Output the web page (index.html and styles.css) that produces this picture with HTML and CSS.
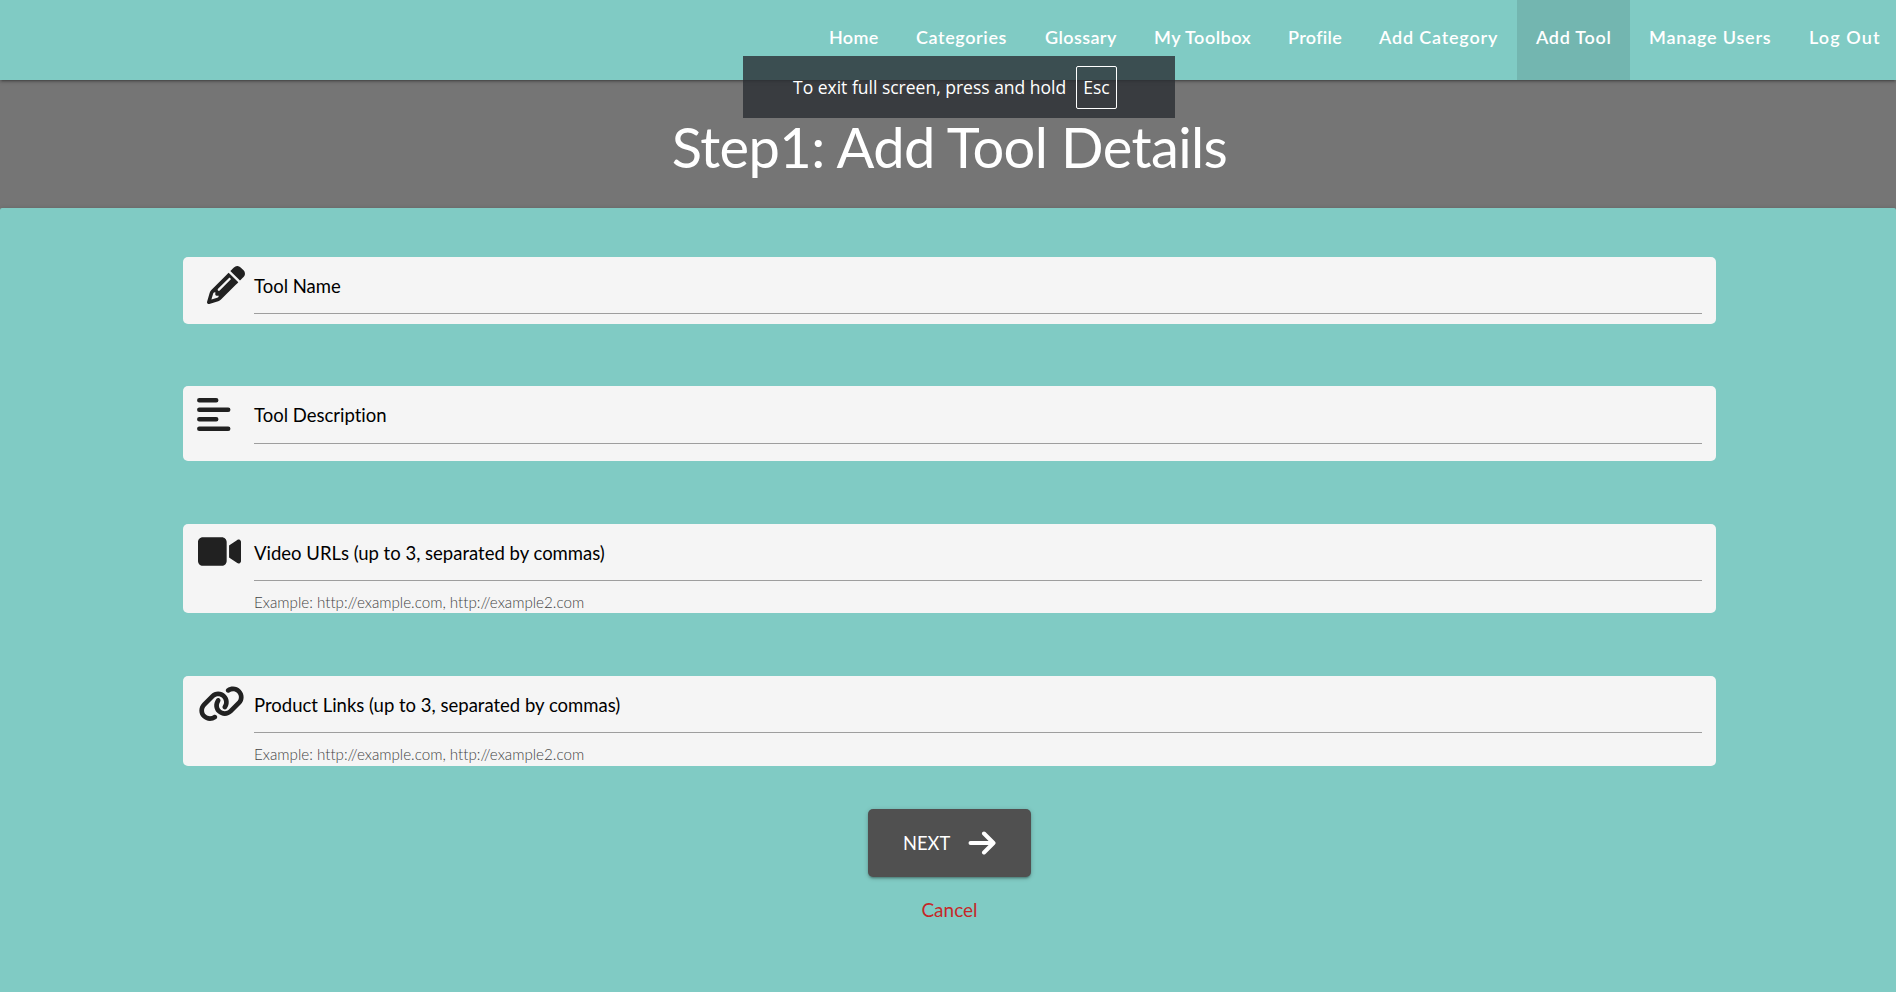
FILE: index.html
```html
<!DOCTYPE html>
<html lang="en">
<head>
<meta charset="utf-8">
<title>Add Tool</title>
<link rel="stylesheet" href="styles.css">
</head>
<body>
<nav class="nav">
  <a class="nav-link home">Home</a>
  <a class="nav-link categories">Categories</a>
  <a class="nav-link glossary">Glossary</a>
  <a class="nav-link toolbox">My Toolbox</a>
  <a class="nav-link profile">Profile</a>
  <a class="nav-link add-category">Add Category</a>
  <a class="nav-link add-tool active">Add Tool</a>
  <a class="nav-link users">Manage Users</a>
  <a class="nav-link logout">Log Out</a>
</nav>
<header class="banner"><h1 class="title">Step1: Add Tool Details</h1></header>
<main class="panel">
  <form class="form">
    <div class="field name">
      <svg class="icon pencil" viewBox="0 0 512 512"><path d="M410.300 231l11.300-11.300-33.900-33.900-62.100-62.100L291.700 89.800l-11.300 11.300-22.600 22.600L58.600 322.900c-10.400 10.400-18 23.300-22.200 37.400L1 480.700c-2.500 8.400-.2 17.500 6.100 23.700s15.300 8.500 23.700 6.100l120.300-35.400c14.100-4.200 27-11.800 37.400-22.200L387.700 253.700 410.300 231zM160 399.400l-9.100 22.700c-4 3.100-8.500 5.400-13.300 6.900L59.400 452l23-78.100c1.400-4.900 3.800-9.400 6.900-13.300l22.700-9.100v32c0 8.800 7.200 16 16 16h32zM362.700 18.700L348.300 33.200 325.700 55.800 314.300 67.100l33.900 33.900 62.100 62.100 33.900 33.900 11.300-11.300 22.600-22.600 14.500-14.500c25-25 25-65.500 0-90.500L453.300 18.700c-25-25-65.500-25-90.500 0zm-47.400 168l-144 144c-6.200 6.200-16.400 6.200-22.600 0s-6.200-16.400 0-22.600l144-144c6.200-6.200 16.400-6.200 22.600 0s6.200 16.400 0 22.600z"/></svg>
      <div class="control"><label class="label">Tool Name</label></div>
    </div>
    <div class="field description">
      <svg class="icon lines" viewBox="0 0 34 34"><path d="M2.300 2.300H19.200M2.300 11.800H31.200M2.300 21.300H19.200M2.300 30.800H31.200"/></svg>
      <div class="control"><label class="label">Tool Description</label></div>
    </div>
    <div class="field video">
      <svg class="icon camera" viewBox="0 64 576 384"><path d="M0 128C0 92.700 28.700 64 64 64H320c35.300 0 64 28.700 64 64V384c0 35.300-28.700 64-64 64H64c-35.300 0-64-28.700-64-64V128zM559.100 99.800c10.400 5.600 16.900 16.400 16.900 28.200V384c0 11.800-6.500 22.600-16.900 28.200s-23 5-32.900-1.600l-96-64L416 337.100V174.900l14.200-9.500 96-64c9.800-6.500 22.400-7.200 32.900-1.600z"/></svg>
      <div class="control"><label class="label">Video URLs (up to 3, separated by commas)</label></div>
      <span class="helper">Example: http://example.com, http://example2.com</span>
    </div>
    <div class="field links">
      <svg class="icon chain" viewBox="0 0 640 512"><path d="M579.800 267.700c56.500-56.500 56.500-148 0-204.500c-50-50-128.800-56.500-186.300-15.400l-1.600 1.100c-14.400 10.300-17.700 30.300-7.400 44.600s30.300 17.700 44.600 7.400l1.600-1.100c32.100-22.900 76-19.300 103.800 8.600c31.500 31.500 31.500 82.500 0 114L422.300 334.800c-31.500 31.500-82.500 31.500-114 0c-27.900-27.900-31.500-71.800-8.600-103.800l1.100-1.600c10.300-14.400 6.900-34.400-7.400-44.600s-34.400-6.900-44.600 7.400l-1.100 1.600C206.500 251.200 213 330 263 380c56.500 56.500 148 56.500 204.500 0L579.800 267.700zM60.200 244.300c-56.500 56.500-56.500 148 0 204.500c50 50 128.800 56.500 186.300 15.400l1.600-1.100c14.400-10.300 17.700-30.300 7.400-44.600s-30.300-17.700-44.600-7.400l-1.600 1.100c-32.100 22.900-76 19.300-103.800-8.600C74 372 74 321 105.500 289.500L217.700 177.200c31.500-31.500 82.500-31.500 114 0c27.900 27.900 31.500 71.800 8.600 103.900l-1.100 1.600c-10.300 14.400-6.900 34.400 7.400 44.600s34.400 6.900 44.600-7.400l1.100-1.600C433.500 260.800 427 182 377 132c-56.500-56.500-148-56.500-204.500 0L60.200 244.300z"/></svg>
      <div class="control"><label class="label">Product Links (up to 3, separated by commas)</label></div>
      <span class="helper">Example: http://example.com, http://example2.com</span>
    </div>
    <button class="next" type="button"><span class="next-text">NEXT</span><svg class="arrow" viewBox="0 0 28 24"><path d="M2.500 12H25M16 2.500L25.500 12L16 21.500"/></svg></button>
    <a class="cancel">Cancel</a>
  </form>
</main>
<div class="toast"><span class="toast-text">To exit full screen, press and hold</span><span class="key">Esc</span></div>
</body>
</html>
```

FILE: styles.css
```css
* { box-sizing: border-box; }
body { margin: 0; height: 992px; overflow: hidden; background: #757575; font-family: Lato, sans-serif; color: #000; font-variant-ligatures: none; }
.nav { position: relative; height: 80px; display: flex; padding-left: 810px; background: #80cbc4; box-shadow: 0 2px 2px 0 rgba(0,0,0,.14), 0 3px 1px -2px rgba(0,0,0,.12), 0 1px 5px 0 rgba(0,0,0,.2); }
.nav-link { flex: none; height: 80px; padding-left: 19px; line-height: 75px; color: #fff; font-size: 18px; font-weight: 600; white-space: nowrap; }
.home { width: 87px; letter-spacing: .3px; }
.categories { width: 129px; letter-spacing: .6px; }
.glossary { width: 109px; letter-spacing: .4px; }
.toolbox { width: 134px; letter-spacing: .5px; }
.profile { width: 91px; letter-spacing: .3px; }
.add-category { width: 157px; letter-spacing: .8px; }
.add-tool { width: 113px; letter-spacing: .7px; }
.users { width: 160px; letter-spacing: .8px; }
.logout { width: 106px; letter-spacing: 1.1px; }
.active { background: #73b6b0; }
.banner { height: 128px; display: flex; justify-content: center; }
.title { margin: 33px 0 0 3px; font-size: 56px; font-weight: 400; line-height: 68px; letter-spacing: -.6px; color: #fff; white-space: nowrap; }
.panel { height: 800px; background: #80cbc4; border-radius: 2px; padding: 49px 180px 0 183px; box-shadow: 0 2px 2px 0 rgba(0,0,0,.14), 0 3px 1px -2px rgba(0,0,0,.12), 0 1px 5px 0 rgba(0,0,0,.2); }
.form { display: flex; flex-direction: column; align-items: center; }
.field { width: 1533px; flex: none; display: grid; grid-template-columns: 57px 1448px; grid-template-rows: auto 1fr; padding-left: 14px; background: #f5f5f5; border-radius: 5px; }
.name { height: 67px; margin-bottom: 62px; }
.description { height: 75px; margin-bottom: 63px; }
.video { height: 89px; margin-bottom: 63px; }
.links { height: 90px; margin-bottom: 43px; }
.control { height: 57px; border-bottom: 1px solid #9e9e9e; }
.description .control { height: 58px; }
.label { display: block; padding-top: 17px; line-height: 24px; font-size: 18.5px; white-space: nowrap; }
.helper { grid-column: 2; padding-top: 11px; line-height: 20px; font-size: 15.2px; font-weight: 300; color: #444; white-space: nowrap; }
.icon { fill: #212121; }
.pencil { width: 38px; height: 38px; margin: 9px 0 0 10px; }
.lines { width: 34px; height: 34px; margin: 12px 0 0 .4px; fill: none; stroke: #212121; stroke-width: 4.500; stroke-linecap: round; }
.camera { width: 43px; height: 29px; margin: 13px 0 0 .5px; }
.chain { width: 47px; height: 37.5px; margin: 9px 0 0 .5px; }
.next { width: 163px; height: 68px; flex: none; display: flex; align-items: center; padding: 0 0 0 35px; border: 0; border-radius: 5px; background: #505050; color: #fff; font-family: Lato, sans-serif; font-size: 18.3px; box-shadow: 0 2px 2px 0 rgba(0,0,0,.14), 0 3px 1px -2px rgba(0,0,0,.12), 0 1px 5px 0 rgba(0,0,0,.2); }
.next-text { width: 65px; text-align: left; }
.arrow { width: 28px; height: 24px; fill: none; stroke: #fff; stroke-width: 4; stroke-linecap: round; stroke-linejoin: round; }
.cancel { margin-top: 21px; line-height: 24px; font-size: 19px; color: #c62828; }
.toast { position: absolute; left: 743px; top: 56px; width: 432px; height: 62px; display: flex; padding: 10px 0 0 50px; background: rgba(41,44,49,.79); color: #fff; font-family: "Open Sans", sans-serif; font-size: 17.5px; }
.toast-text { width: 283px; line-height: 43px; white-space: nowrap; }
.key { width: 41px; height: 43px; border: 1px solid #fff; border-radius: 2px; line-height: 41px; text-align: center; }
```
